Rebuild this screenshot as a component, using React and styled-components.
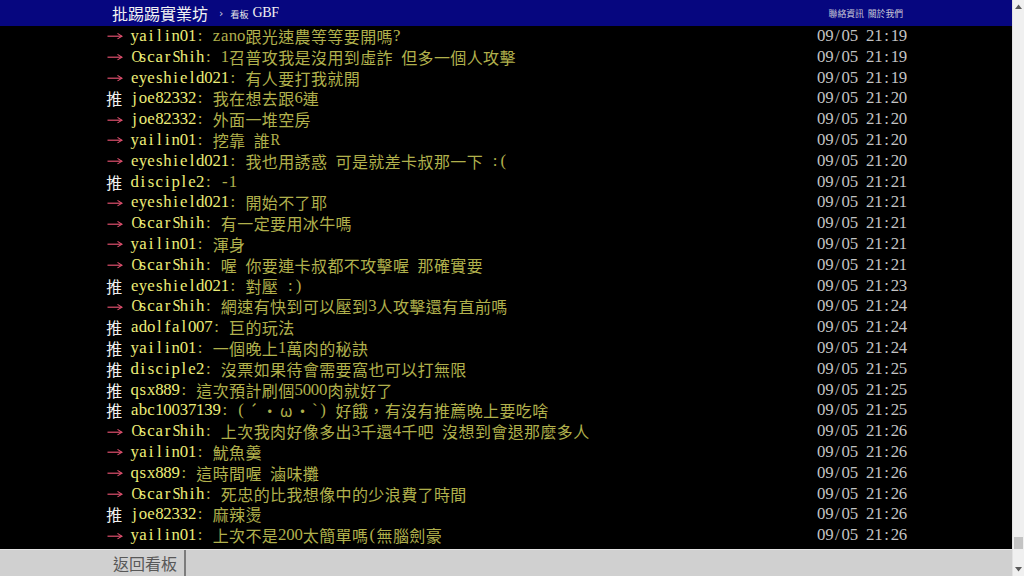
import React from "react";
import styled, { createGlobalStyle } from "styled-components";

const Global = createGlobalStyle`
  html, body { margin: 0; padding: 0; background: #000; }
  body { font-family: "Liberation Serif", "Noto Sans CJK TC", serif; }
`;

const CELL = 8.2;
const LINE = 20.8;

const Page = styled.div`
  display: flex;
  width: 100vw;
  height: 100vh;
  overflow: hidden;
`;

const Main = styled.div`
  flex: 1;
  display: flex;
  flex-direction: column;
  min-width: 0;
`;

const Inner = styled.div`
  width: 800px;
  margin: 0 auto;
  box-sizing: border-box;
`;

const TopBar = styled.header`
  background: #06067f;
  height: 26px;
  flex: none;
`;

const TopInner = styled(Inner)`
  display: flex;
  align-items: center;
  height: 100%;
  padding: 0 3px 0 6px;
  color: #eee;
`;

const Title = styled.span`
  font-family: "Noto Sans CJK TC", sans-serif;
  font-size: 16px;
  line-height: 1;
  color: #f2f2f2;
`;

const Sep = styled.span`
  font-family: "DejaVu Sans", sans-serif;
  font-size: 11px;
  color: #cfcfe0;
  margin: 1px 7px 0 11px;
`;

const BoardLabel = styled.span`
  font-family: "Noto Sans CJK TC", sans-serif;
  font-size: 9px;
  color: #e8e8e8;
  margin-top: 2px;
`;

const BoardName = styled.span`
  font-family: "Liberation Serif", serif;
  font-size: 14px;
  color: #f2f2f2;
  margin-left: 4px;
  letter-spacing: -0.3px;
`;

const Links = styled.nav`
  margin-left: auto;
  display: flex;
  gap: 4px;
  font-family: "Noto Sans CJK TC", sans-serif;
  font-size: 8.8px;
  color: #c8c8d8;
  margin-top: 1px;
`;

const Screen = styled.main`
  flex: 1;
  background: #000;
`;

const Row = styled.div`
  display: flex;
  align-items: center;
  height: ${LINE}px;
  line-height: ${LINE}px;
  font-size: 16.4px;
  white-space: nowrap;
`;

const Tag = styled.span`
  width: ${CELL * 3}px;
  flex: none;
  display: flex;
  color: ${(p) => (p.$push ? "#f0f0f0" : "#e0506e")};
`;

const UserId = styled.span`
  color: #eded78;
  flex: none;
`;

const Content = styled.span`
  color: #b0b04c;
  flex: 1;
  min-width: 0;
`;

const DateTime = styled.span`
  color: #c4c4c4;
  flex: none;
  margin-right: -1px;
`;

const Half = styled.span`
  display: inline-block;
  vertical-align: top;
  width: ${CELL}px;
  line-height: ${LINE}px;
  text-align: center;
  white-space: pre;
  font-family: "Liberation Serif", serif;
  font-size: 16.8px;
  transform: ${(p) => (p.$wide ? "scaleX(0.86)" : "none")};
`;

const Full = styled.span`
  display: inline-block;
  vertical-align: top;
  width: ${CELL * 2}px;
  line-height: ${LINE}px;
  text-align: center;
  font-family: "Noto Sans CJK TC", sans-serif;
  font-size: 16px;
`;

const Arrow = styled.svg`
  display: block;
  width: 16px;
  height: 8px;
  margin-left: 1px;
`;

const Footer = styled.footer`
  height: 27px;
  flex: none;
  background: #d0d0d0;
  border-top: 1px solid #e4e4e4;
  box-sizing: border-box;
`;

const FooterInner = styled(Inner)`
  display: flex;
  height: 100%;
`;

const BackButton = styled.a`
  display: flex;
  align-items: center;
  padding: 0 7px;
  border-right: 2px solid #7c7c7c;
  font-family: "Noto Sans CJK TC", sans-serif;
  font-size: 16px;
  color: #585858;
  text-decoration: none;
`;

const ScrollBar = styled.div`
  width: 11px;
  flex: none;
  background: #f0f0f0;
  border-left: 1px solid #e2e2e2;
  display: flex;
  flex-direction: column;
`;

const ScrollBtn = styled.div`
  height: 13px;
  display: flex;
  align-items: center;
  justify-content: center;
`;

const Track = styled.div`
  flex: 1;
  display: flex;
  flex-direction: column;
  justify-content: flex-end;
  padding-bottom: 14px;
`;

const Thumb = styled.div`
  height: 12px;
  margin: 0 1px;
  background: #c4c4c4;
`;

const WIDE = /[A-Zmw@%]/;

function Glyphs({ text }) {
  return Array.from(text).map((ch, i) =>
    ch.charCodeAt(0) < 0x80 ? (
      <Half key={i} $wide={WIDE.test(ch)}>
        {ch}
      </Half>
    ) : (
      <Full key={i}>{ch}</Full>
    )
  );
}

const pushes = [
  ["→", "yailin01", "zano跟光速農等等要開嗎?", "09/05 21:19"],
  ["→", "OscarShih", "1召普攻我是沒用到虛詐 但多一個人攻擊", "09/05 21:19"],
  ["→", "eyeshield021", "有人要打我就開", "09/05 21:19"],
  ["推", "joe82332", "我在想去跟6連", "09/05 21:20"],
  ["→", "joe82332", "外面一堆空房", "09/05 21:20"],
  ["→", "yailin01", "挖靠 誰R", "09/05 21:20"],
  ["→", "eyeshield021", "我也用誘惑 可是就差卡叔那一下 :(", "09/05 21:20"],
  ["推", "disciple2", "-1", "09/05 21:21"],
  ["→", "eyeshield021", "開始不了耶", "09/05 21:21"],
  ["→", "OscarShih", "有一定要用冰牛嗎", "09/05 21:21"],
  ["→", "yailin01", "渾身", "09/05 21:21"],
  ["→", "OscarShih", "喔 你要連卡叔都不攻擊喔 那確實要", "09/05 21:21"],
  ["推", "eyeshield021", "對壓 :)", "09/05 21:23"],
  ["→", "OscarShih", "網速有快到可以壓到3人攻擊還有直前嗎", "09/05 21:24"],
  ["推", "adolfal007", "巨的玩法", "09/05 21:24"],
  ["推", "yailin01", "一個晚上1萬肉的秘訣", "09/05 21:24"],
  ["推", "disciple2", "沒票如果待會需要窩也可以打無限", "09/05 21:25"],
  ["推", "qsx889", "這次預計刷個5000肉就好了", "09/05 21:25"],
  ["推", "abc10037139", "(´・ω・`) 好餓，有沒有推薦晚上要吃啥", "09/05 21:25"],
  ["→", "OscarShih", "上次我肉好像多出3千還4千吧 沒想到會退那麼多人", "09/05 21:26"],
  ["→", "yailin01", "魷魚羹", "09/05 21:26"],
  ["→", "qsx889", "這時間喔 滷味攤", "09/05 21:26"],
  ["→", "OscarShih", "死忠的比我想像中的少浪費了時間", "09/05 21:26"],
  ["推", "joe82332", "麻辣燙", "09/05 21:26"],
  ["→", "yailin01", "上次不是200太簡單嗎(無腦劍豪", "09/05 21:26"],
];

function PushTag({ tag }) {
  if (tag === "推") {
    return (
      <Tag $push>
        <Full>推</Full>
      </Tag>
    );
  }
  return (
    <Tag aria-label="→">
      <Arrow viewBox="0 0 16 8">
        <path d="M0.5 4.2 H14.5" stroke="currentColor" strokeWidth="1.2" fill="none" />
        <path d="M10.5 1.4 L15 4.2 L10.5 6.9" stroke="currentColor" strokeWidth="1.1" fill="none" />
      </Arrow>
    </Tag>
  );
}

function TriangleUp() {
  return (
    <svg width="7" height="5" viewBox="0 0 7 5">
      <path d="M0 5 L3.5 0.5 L7 5 Z" fill="#5a5a5a" />
    </svg>
  );
}

function TriangleDown() {
  return (
    <svg width="7" height="5" viewBox="0 0 7 5">
      <path d="M0 0 L7 0 L3.5 4.5 Z" fill="#5a5a5a" />
    </svg>
  );
}

export default function App() {
  return (
    <>
      <Global />
      <Page>
        <Main>
          <TopBar>
            <TopInner>
              <Title>批踢踢實業坊</Title>
              <Sep>›</Sep>
              <BoardLabel>看板</BoardLabel>
              <BoardName>GBF</BoardName>
              <Links>
                <span>聯絡資訊</span>
                <span>關於我們</span>
              </Links>
            </TopInner>
          </TopBar>
          <Screen>
            <Inner>
              {pushes.map(([tag, user, text, time], i) => (
                <Row key={i}>
                  <PushTag tag={tag} />
                  <UserId>
                    <Glyphs text={user} />
                  </UserId>
                  <Content>
                    <Glyphs text={": " + text} />
                  </Content>
                  <DateTime>
                    <Glyphs text={time} />
                  </DateTime>
                </Row>
              ))}
            </Inner>
          </Screen>
          <Footer>
            <FooterInner>
              <BackButton href="#">返回看板</BackButton>
            </FooterInner>
          </Footer>
        </Main>
        <ScrollBar>
          <ScrollBtn>
            <TriangleUp />
          </ScrollBtn>
          <Track>
            <Thumb />
          </Track>
          <ScrollBtn>
            <TriangleDown />
          </ScrollBtn>
        </ScrollBar>
      </Page>
    </>
  );
}
